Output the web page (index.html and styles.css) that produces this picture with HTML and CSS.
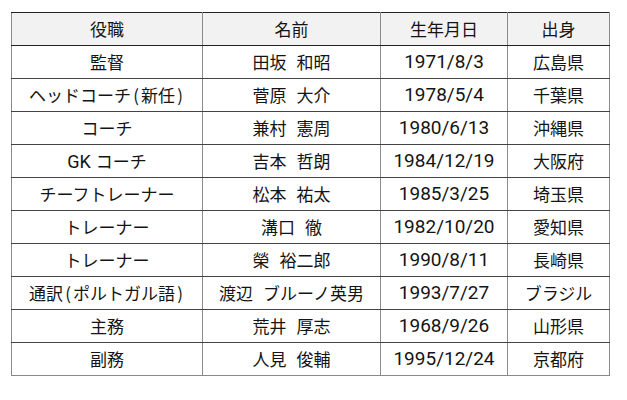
FILE: index.html
```html
<!DOCTYPE html>
<html lang="ja">
<head>
<meta charset="utf-8">
<link rel="stylesheet" href="styles.css">
</head>
<body>
<table class="staff">
  <colgroup>
    <col class="c1"><col class="c2"><col class="c3"><col class="c4">
  </colgroup>
  <thead>
    <tr><th>役職</th><th>名前</th><th>生年月日</th><th>出身</th></tr>
  </thead>
  <tbody>
    <tr><td>監督</td><td>田坂 和昭</td><td class="num">1971/8/3</td><td>広島県</td></tr>
    <tr><td>ヘッドコーチ<span class="par">(</span>新任<span class="par">)</span></td><td>菅原 大介</td><td class="num">1978/5/4</td><td>千葉県</td></tr>
    <tr><td>コーチ</td><td>兼村 憲周</td><td class="num">1980/6/13</td><td>沖縄県</td></tr>
    <tr><td class="tight"><span class="lat">GK</span> コーチ</td><td>吉本 哲朗</td><td class="num">1984/12/19</td><td>大阪府</td></tr>
    <tr><td>チーフトレーナー</td><td>松本 祐太</td><td class="num">1985/3/25</td><td>埼玉県</td></tr>
    <tr><td>トレーナー</td><td>溝口 徹</td><td class="num">1982/10/20</td><td>愛知県</td></tr>
    <tr><td>トレーナー</td><td>榮 裕二郎</td><td class="num">1990/8/11</td><td>長崎県</td></tr>
    <tr><td>通訳<span class="par">(</span>ポルトガル語<span class="par">)</span></td><td>渡辺 ブルーノ英男</td><td class="num">1993/7/27</td><td>ブラジル</td></tr>
    <tr><td>主務</td><td>荒井 厚志</td><td class="num">1968/9/26</td><td>山形県</td></tr>
    <tr><td>副務</td><td>人見 俊輔</td><td class="num">1995/12/24</td><td>京都府</td></tr>
  </tbody>
</table>
</body>
</html>
```
FILE: styles.css
```css
html, body {
  margin: 0;
  padding: 0;
  background: #ffffff;
}
body {
  padding: 12px 0 0 11px;
  font-family: "Noto Sans CJK JP", sans-serif;
  color: #141414;
}
.staff {
  border-collapse: collapse;
  table-layout: fixed;
  width: 598px;
  font-size: 17px;
}
.c1 { width: 191px; }
.c2 { width: 178px; }
.c3 { width: 127px; }
.c4 { width: 102px; }
.staff th,
.staff td {
  height: 32px;
  padding: 0;
  text-align: center;
  vertical-align: middle;
  font-weight: normal;
  line-height: 20px;
  word-spacing: 6px;
  border-left: 1px solid #8a8a8a;
  border-right: 1px solid #8a8a8a;
  border-bottom: 1px solid #444;
  white-space: nowrap;
}
.staff th {
  background: #f2f2f2;
  border-top: 1px solid #222;
  border-bottom: 1px solid #222;
}
.staff tbody tr:last-child td {
  border-bottom: 1px solid #888;
}
.staff td.tight {
  word-spacing: 1px;
}
.par {
  display: inline-block;
  width: 10px;
  text-align: center;
}
.staff td.num {
  font-family: "Roboto", "DejaVu Sans", sans-serif;
  font-size: 19px;
  word-spacing: 0;
}
.lat {
  font-family: "Roboto", "DejaVu Sans", sans-serif;
  font-size: 18px;
}
```
